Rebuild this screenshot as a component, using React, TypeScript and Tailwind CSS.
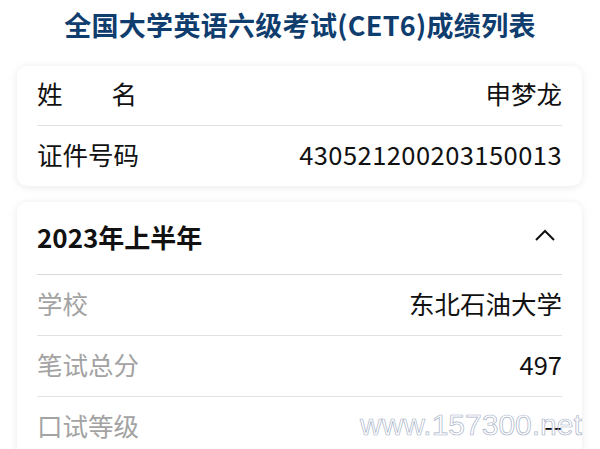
import React from "react";

const font = { fontFamily: '"Noto Sans CJK SC", "Noto Sans", sans-serif' };

function Row({
  label,
  value,
  muted,
  last,
  h = "h-[61px]",
  mono,
}: {
  label: React.ReactNode;
  value: string;
  muted?: boolean;
  last?: boolean;
  h?: string;
  mono?: boolean;
}) {
  return (
    <div className={`mx-5 flex ${h} items-center justify-between pb-[5px] ${last ? "" : "border-b border-[#e2e2e2]"}`}>
      <div className={`text-[25.5px] leading-none ${muted ? "text-[#a3a3a3]" : "text-[#111]"}`}>{label}</div>
      <div className={`text-[25.5px] leading-none text-[#111] ${mono ? "tracking-[0.45px]" : ""}`}>{value}</div>
    </div>
  );
}

export default function App() {
  return (
    <div className="relative h-[449px] w-[600px] overflow-hidden bg-white" style={font}>
      <h1 className="pt-[6px] text-center text-[27px] font-bold leading-[38px] tracking-[0.3px] text-[#0f3d6e]">
        全国大学英语六级考试(CET6)成绩列表
      </h1>

      <div className="ml-[17px] mr-[18px] mt-[22px] rounded-[10px] bg-white shadow-[0_1px_8px_rgba(0,0,0,0.09)]">
        <Row
          h="h-[60px]"
          label={
            <span className="flex w-[100px] justify-between">
              <span>姓</span>
              <span>名</span>
            </span>
          }
          value="申梦龙"
        />
        <Row h="h-[60px]" label="证件号码" value="430521200203150013" mono last />
      </div>

      <div className="ml-[17px] mr-[18px] mt-[16px] rounded-[10px] bg-white shadow-[0_1px_8px_rgba(0,0,0,0.09)]">
        <div className="mx-5 flex h-[73px] items-center justify-between border-b border-[#d8d8d8] pb-[2px]">
          <div className="text-[26px] font-bold leading-none text-[#111]">2023年上半年</div>
          <svg width="22" height="12" viewBox="0 0 22 12" fill="none" className="mb-[4px] mr-[6px]">
            <path d="M2 11 L11 2 L20 11" stroke="#111" strokeWidth="2" />
          </svg>
        </div>
        <Row label="学校" value="东北石油大学" muted />
        <Row label="笔试总分" value="497" muted />
        <Row label="口试等级" value="--" muted last />
      </div>

      <div
        className="absolute left-[360px] top-[405px] text-[30px] leading-[40px] text-transparent [-webkit-text-stroke:0.7px_#a9b4c8]"
        style={{ fontFamily: '"Liberation Sans", sans-serif' }}
      >
        www.157300.net
      </div>
    </div>
  );
}
